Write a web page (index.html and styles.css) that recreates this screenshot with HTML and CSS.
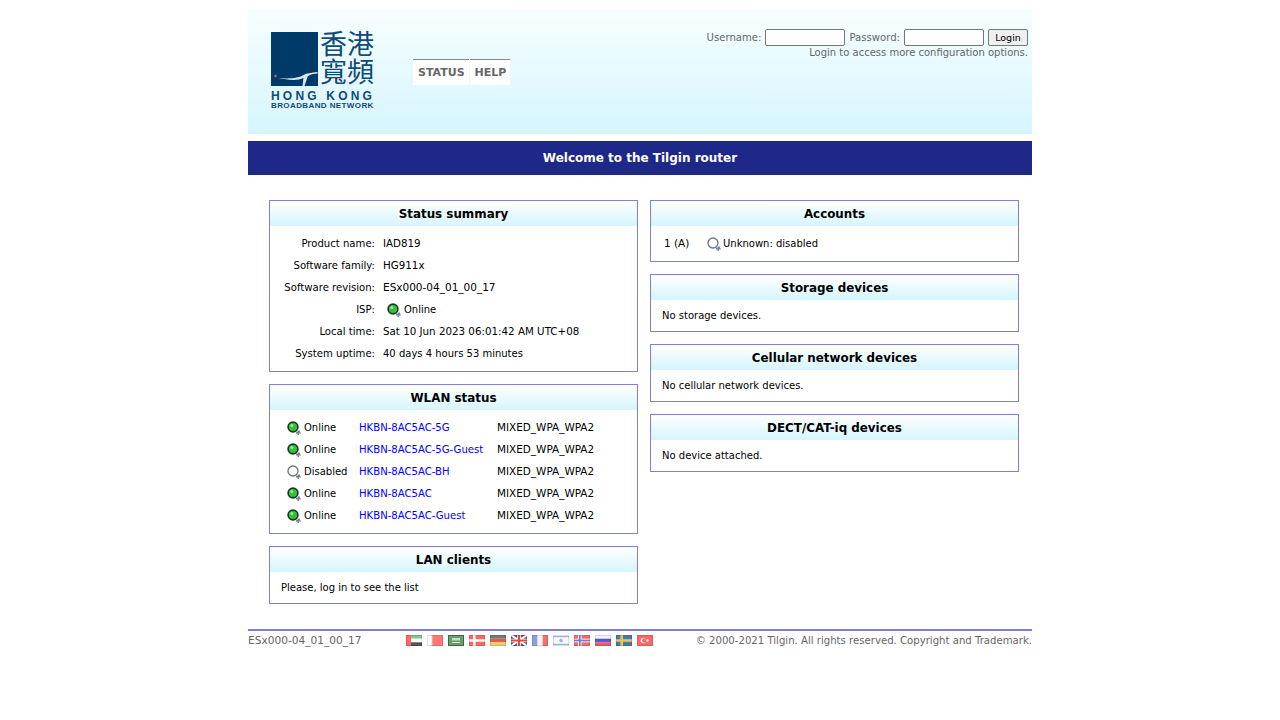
FILE: index.html
```html
<!DOCTYPE html>
<html lang="en">

<head>
    <meta charset="UTF-8">
    <title>Tilgin router</title>
    <link rel="stylesheet" href="styles.css">
</head>

<body>
    <svg class="defs" width="0" height="0">
        <symbol id="dot-on" viewBox="0 0 14 14">
            <circle cx="6" cy="6" r="4.9" fill="#35c035" stroke="#16382a" stroke-width="1.6"/>
            <circle cx="4.8" cy="4.4" r="1.5" fill="#9aee9a"/>
            <path d="M9 10.500h2v-1h2v2h1v1h-2v1.500h-1.500v-1.500h-1.500z" fill="#7a8490"/>
        </symbol>
        <symbol id="dot-off" viewBox="0 0 14 14">
            <circle cx="6" cy="6" r="5" fill="#fff" stroke="#6a7480" stroke-width="1.3"/>
            <path d="M9 10.500h2v-1h2v2h1v1h-2v1.500h-1.500v-1.500h-1.500z" fill="#7a8490"/>
        </symbol>
    </svg>

    <div class="page">
        <header class="top">
            <div class="logo">
                <div class="logo-mark">
                    <div class="logo-square">
                        <svg width="47" height="54" viewBox="0 0 46 54">
                            <circle cx="4" cy="44" r="1.3" fill="#c8643c"/>
                            <path d="M7 46 C18 47 28 46 32 43 C35 41 40 41 46 40 L46 41.5 C40 42 37 43 36 45 L33 54 L31 54 L32 46 C26 49 16 48 7 46z" fill="#dce8f0"/>
                        </svg>
                    </div>
                    <div class="logo-cjk" lang="zh-Hant">香港<br>寬頻</div>
                </div>
                <div class="logo-hk">HONG KONG</div>
                <div class="logo-net">BROADBAND NETWORK</div>
            </div>
            <nav class="tabs">
                <a href="#status">STATUS</a>
                <a href="#help">HELP</a>
            </nav>
            <form class="login">
                <div class="login-row">
                    <label for="user">Username:</label>
                    <input type="text" id="user">
                    <label for="pass">Password:</label>
                    <input type="password" id="pass">
                    <button type="button">Login</button>
                </div>
                <p>Login to access more configuration options.</p>
            </form>
        </header>

        <div class="banner">Welcome to the Tilgin router</div>

        <main class="columns">
            <div class="col">
                <section class="box">
                    <h2>Status summary</h2>
                    <dl class="summary">
                        <dt>Product name:</dt><dd>IAD819</dd>
                        <dt>Software family:</dt><dd>HG911x</dd>
                        <dt>Software revision:</dt><dd class="rev">ESx000-04_01_00_17</dd>
                        <dt>ISP:</dt><dd class="isp"><svg class="dot"><use href="#dot-on"/></svg>Online</dd>
                        <dt>Local time:</dt><dd>Sat 10 Jun 2023 06:01:42 AM UTC+08</dd>
                        <dt>System uptime:</dt><dd class="uptime">40 days 4 hours 53 minutes</dd>
                    </dl>
                </section>

                <section class="box">
                    <h2>WLAN status</h2>
                    <div class="wlan">
                        <span class="state"><svg class="dot"><use href="#dot-on"/></svg>Online</span><a href="#">HKBN-8AC5AC-5G</a><span class="sec">MIXED_WPA_WPA2</span>
                        <span class="state"><svg class="dot"><use href="#dot-on"/></svg>Online</span><a href="#">HKBN-8AC5AC-5G-Guest</a><span class="sec">MIXED_WPA_WPA2</span>
                        <span class="state"><svg class="dot"><use href="#dot-off"/></svg>Disabled</span><a href="#">HKBN-8AC5AC-BH</a><span class="sec">MIXED_WPA_WPA2</span>
                        <span class="state"><svg class="dot"><use href="#dot-on"/></svg>Online</span><a href="#">HKBN-8AC5AC</a><span class="sec">MIXED_WPA_WPA2</span>
                        <span class="state"><svg class="dot"><use href="#dot-on"/></svg>Online</span><a href="#">HKBN-8AC5AC-Guest</a><span class="sec">MIXED_WPA_WPA2</span>
                    </div>
                </section>

                <section class="box">
                    <h2>LAN clients</h2>
                    <p class="note">Please, log in to see the list</p>
                </section>
            </div>

            <div class="col">
                <section class="box">
                    <h2>Accounts</h2>
                    <div class="account">
                        <span class="account-id">1 (A)</span>
                        <span class="state"><svg class="dot"><use href="#dot-off"/></svg>Unknown: disabled</span>
                    </div>
                </section>

                <section class="box">
                    <h2>Storage devices</h2>
                    <p class="note">No storage devices.</p>
                </section>

                <section class="box">
                    <h2>Cellular network devices</h2>
                    <p class="note">No cellular network devices.</p>
                </section>

                <section class="box">
                    <h2>DECT/CAT-iq devices</h2>
                    <p class="note">No device attached.</p>
                </section>
            </div>
        </main>

        <footer class="foot">
            <span class="version">ESx000-04_01_00_17</span>
            <div class="flags">
                <svg viewBox="0 0 16 11"><rect width="16" height="3.7" fill="#7fc48f"/><rect y="3.7" width="16" height="3.6" fill="#fff"/><rect y="7.3" width="16" height="3.7" fill="#555"/><rect width="5" height="11" fill="#f66"/></svg>
                <svg viewBox="0 0 16 11"><rect width="16" height="11" fill="#f77"/><path d="M0 0h4l2 1-2 1 2 1-2 1 2 1-2 1 2 1-2 1 2 1-2 2H0z" fill="#fff"/></svg>
                <svg viewBox="0 0 16 11"><rect width="16" height="11" fill="#6c9c6c"/><rect x=".5" y=".5" width="15" height="10" fill="none" stroke="#4a754a"/><rect x="4" y="3" width="8" height="2.5" fill="#c4dcc4"/><rect x="4" y="7" width="8" height="1" fill="#dcecdc"/></svg>
                <svg viewBox="0 0 16 11"><rect width="16" height="11" fill="#f66"/><rect x="4" width="2.5" height="11" fill="#fff"/><rect y="4.2" width="16" height="2.5" fill="#fff"/></svg>
                <svg viewBox="0 0 16 11"><rect width="16" height="3.7" fill="#777"/><rect y="3.7" width="16" height="3.6" fill="#e55"/><rect y="7.3" width="16" height="3.7" fill="#f0d060"/></svg>
                <svg viewBox="0 0 16 11"><rect width="16" height="11" fill="#557"/><path d="M0 0l16 11M16 0L0 11" stroke="#fff" stroke-width="2"/><path d="M8 0v11M0 5.500h16" stroke="#fff" stroke-width="3.600"/><path d="M8 0v11M0 5.500h16" stroke="#e44" stroke-width="2"/></svg>
                <svg viewBox="0 0 16 11"><rect width="16" height="11" fill="#f4f4f8"/><rect width="5.300" height="11" fill="#88a0d8"/><rect x="10.700" width="5.300" height="11" fill="#f07070"/></svg>
                <svg viewBox="0 0 16 11"><rect width="16" height="11" fill="#f8f8ff"/><rect y="1" width="16" height="1.200" fill="#9ab4ec"/><rect y="8.800" width="16" height="1.200" fill="#9ab4ec"/><circle cx="8" cy="5.500" r="1.800" fill="#9ab4ec"/></svg>
                <svg viewBox="0 0 16 11"><rect width="16" height="11" fill="#f66"/><rect x="4" width="3.600" height="11" fill="#fff"/><rect y="3.700" width="16" height="3.600" fill="#fff"/><rect x="4.900" width="1.800" height="11" fill="#6a80c8"/><rect y="4.600" width="16" height="1.800" fill="#6a80c8"/></svg>
                <svg viewBox="0 0 16 11"><rect width="16" height="3.700" fill="#f4f4f8"/><rect y="3.700" width="16" height="3.600" fill="#4a58e8"/><rect y="7.300" width="16" height="3.700" fill="#f05a5a"/></svg>
                <svg viewBox="0 0 16 11"><rect width="16" height="11" fill="#4a78a8"/><rect x="4.400" width="2.600" height="11" fill="#ecc850"/><rect y="4.200" width="16" height="2.600" fill="#ecc850"/></svg>
                <svg viewBox="0 0 16 11"><rect width="16" height="11" fill="#f66"/><circle cx="6.500" cy="5.500" r="2.800" fill="#fff"/><circle cx="7.300" cy="5.500" r="2.200" fill="#f66"/><circle cx="10.500" cy="5.500" r="1.200" fill="#fff"/></svg>
            </div>
            <span class="copyright">&copy; 2000-2021 Tilgin. All rights reserved. Copyright and Trademark.</span>
        </footer>
    </div>
</body>

</html>
```

FILE: styles.css
```css
/* General Styles */
body {
    margin: 0;
    background-color: #fff;
    color: #000;
    font-family: "DejaVu Sans", Verdana, sans-serif;
    font-size: 10px;
}

.defs {
    position: absolute;
}

.page {
    width: 784px;
    margin: 0 auto;
    padding-top: 10px;
}

/* Header */
.top {
    display: flex;
    align-items: flex-start;
    height: 124px;
    background: linear-gradient(#f7feff, #d5f5ff);
}

.logo {
    width: 104px;
    margin: 22px 0 0 23px;
    color: #0f4a78;
}

.logo-mark {
    display: flex;
    gap: 2px;
}

.logo-square {
    width: 47px;
    height: 54px;
    background-color: #003a68;
}

.logo-cjk {
    margin-top: -1px;
    font-family: "Liberation Sans", "Noto Sans CJK TC", sans-serif;
    font-size: 27px;
    line-height: 28px;
    white-space: nowrap;
    color: #0f4a78;
}

.logo-hk {
    margin-top: 3px;
    font-family: "Liberation Sans", sans-serif;
    font-size: 12px;
    font-weight: bold;
    line-height: 12px;
    letter-spacing: 3.2px;
    white-space: nowrap;
}

.logo-net {
    font-family: "Liberation Sans", sans-serif;
    font-size: 8px;
    font-weight: bold;
    line-height: 8px;
    letter-spacing: 0.4px;
    white-space: nowrap;
}

.tabs {
    display: flex;
    gap: 1px;
    margin: 49px 0 0 38px;
}

.tabs a {
    height: 25px;
    padding: 0 4px 0 5px;
    background-color: #fff;
    border-top: 1px solid #8080d0;
    color: #666;
    font-size: 11px;
    font-weight: bold;
    line-height: 25px;
    text-decoration: none;
}

.login {
    margin: 19px 4px 0 auto;
    color: #666;
    text-align: right;
}

.login-row {
    display: flex;
    align-items: center;
    gap: 4px;
    height: 17px;
}

.login label {
    font-size: 10.1px;
}

.login input {
    box-sizing: border-box;
    width: 80px;
    height: 17px;
    padding: 0;
    background-color: #fff;
    border: 1px solid #767676;
    border-radius: 2px;
}

.login button {
    box-sizing: border-box;
    width: 40px;
    height: 17px;
    padding: 0;
    margin: 0;
    background-color: #efefef;
    border: 1px solid #767676;
    border-radius: 2px;
    color: #000;
    font-family: inherit;
    font-size: 9.5px;
}

.login p {
    margin: 1px 0 0;
}

.banner {
    height: 34px;
    margin-top: 7px;
    background-color: #1e2888;
    color: #fff;
    font-size: 12px;
    font-weight: bold;
    line-height: 34px;
    text-align: center;
}

/* Status boxes */
.columns {
    display: flex;
    gap: 12px;
    padding: 25px 13px 0 21px;
}

.col {
    display: flex;
    flex-direction: column;
    gap: 12px;
    flex: 1;
}

.box {
    border: 1px solid #8080d0;
}

.box h2 {
    height: 25px;
    margin: 0;
    background: linear-gradient(#fff, #d5f5ff);
    font-size: 11.9px;
    line-height: 26px;
    text-align: center;
}

.dot {
    width: 14px;
    height: 14px;
    margin-top: 2px;
    flex: none;
}

.state,
.isp {
    display: flex;
    align-items: center;
    gap: 3px;
}

.summary {
    display: grid;
    grid-template-columns: 105px 1fr;
    column-gap: 8px;
    grid-auto-rows: 22px;
    align-items: center;
    margin: 0;
    padding: 6px 0 7px;
}

.summary dt {
    font-size: 10.1px;
    text-align: right;
}

.summary dd {
    margin: 0;
    font-size: 10.3px;
}

.summary .rev {
    font-size: 10.5px;
}

.summary .uptime {
    font-size: 10px;
}

.summary .isp {
    padding-left: 4px;
    font-size: 10px;
}

.wlan {
    display: grid;
    grid-template-columns: 72px 138px 1fr;
    grid-auto-rows: 22px;
    align-items: center;
    padding: 6px 0 7px 17px;
}

.wlan a {
    color: #00f;
    font-size: 10.1px;
    text-decoration: none;
}

.wlan .sec {
    font-size: 10.45px;
}

.note {
    height: 31px;
    margin: 0;
    padding-left: 11px;
    line-height: 31px;
}

.account {
    display: flex;
    align-items: center;
    height: 34px;
    padding: 0 0 1px 13px;
}

.account-id {
    width: 43px;
    font-size: 10.5px;
}

.account .state {
    gap: 2px;
}

/* Footer */
.foot {
    display: flex;
    align-items: center;
    height: 18px;
    margin-top: 25px;
    border-top: 2px solid #8080d0;
    color: #666;
}

.version {
    width: 158px;
    font-size: 10.6px;
}

.flags {
    display: flex;
    gap: 5px;
}

.flags svg {
    display: block;
    width: 16px;
    height: 11px;
    outline: 1px solid rgba(0, 0, 0, 0.12);
    outline-offset: -1px;
}

.copyright {
    margin-left: auto;
    font-size: 10.15px;
}
```
